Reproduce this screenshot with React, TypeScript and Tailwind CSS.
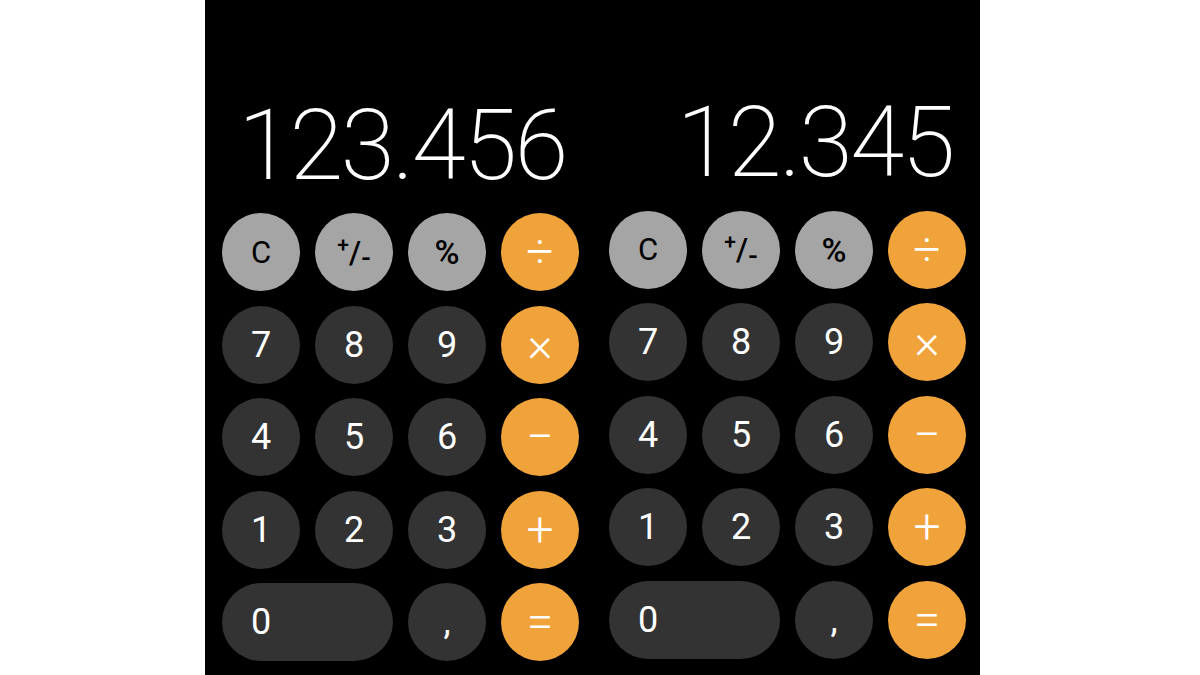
import React from "react";

type Kind = "gray" | "dark" | "orange";

const kindClass: Record<Kind, string> = {
  gray: "bg-[#a5a5a5] text-black",
  dark: "bg-[#333333] text-white",
  orange: "bg-[#f1a33b] text-white",
};

function Btn({ kind, children, wide }: { kind: Kind; children: React.ReactNode; wide?: boolean }) {
  if (wide) {
    return (
      <div className={`col-span-2 h-[78px] rounded-full flex items-center ${kindClass[kind]}`}>
        <span className="w-[78px] text-center text-[36px] leading-none">{children}</span>
      </div>
    );
  }
  return (
    <div className={`h-[78px] w-[78px] rounded-full flex items-center justify-center ${kindClass[kind]}`}>
      {children}
    </div>
  );
}

const Digit = ({ d }: { d: string }) => <span className="text-[36px] leading-none">{d}</span>;
const Op = ({ d }: { d: string }) => <span className="text-[48px] leading-none font-light">{d}</span>;

function PlusMinus() {
  return (
    <span className="inline-flex items-center leading-none font-medium">
      <span className="text-[21px] -translate-y-[7px]">+</span>
      <span className="text-[31px]">/</span>
      <span className="text-[28px] translate-y-[6px]">-</span>
    </span>
  );
}

function Calc({ value, shift }: { value: string; shift?: boolean }) {
  return (
    <div className={`flex flex-col w-[357px] ${shift ? "pt-[94px]" : "pt-[96.5px]"}`}>
      <div className="h-[98px] mb-[18.5px] text-right pr-[13px] text-[98px] leading-none text-white font-extralight tracking-[-2.5px] whitespace-nowrap">
        {value}
      </div>
      <div className="grid grid-cols-4 gap-x-[15px] gap-y-[14.5px]">
        <Btn kind="gray"><span className="text-[31px] leading-none">C</span></Btn>
        <Btn kind="gray"><PlusMinus /></Btn>
        <Btn kind="gray"><span className="text-[34px] leading-none font-medium">%</span></Btn>
        <Btn kind="orange"><Op d="÷" /></Btn>
        <Btn kind="dark"><Digit d="7" /></Btn>
        <Btn kind="dark"><Digit d="8" /></Btn>
        <Btn kind="dark"><Digit d="9" /></Btn>
        <Btn kind="orange"><Op d="×" /></Btn>
        <Btn kind="dark"><Digit d="4" /></Btn>
        <Btn kind="dark"><Digit d="5" /></Btn>
        <Btn kind="dark"><Digit d="6" /></Btn>
        <Btn kind="orange"><Op d="−" /></Btn>
        <Btn kind="dark"><Digit d="1" /></Btn>
        <Btn kind="dark"><Digit d="2" /></Btn>
        <Btn kind="dark"><Digit d="3" /></Btn>
        <Btn kind="orange"><Op d="+" /></Btn>
        <Btn kind="dark" wide>0</Btn>
        <Btn kind="dark"><Digit d="," /></Btn>
        <Btn kind="orange"><Op d="=" /></Btn>
      </div>
    </div>
  );
}

export default function App() {
  return (
    <div className="w-full h-[675px] bg-white flex font-['Roboto',sans-serif] overflow-hidden">
      <div className="ml-[205px] w-[775px] h-full bg-black flex gap-[30px] pl-[17px]">
        <Calc value="123.456" />
        <Calc value="12.345" shift />
      </div>
    </div>
  );
}
